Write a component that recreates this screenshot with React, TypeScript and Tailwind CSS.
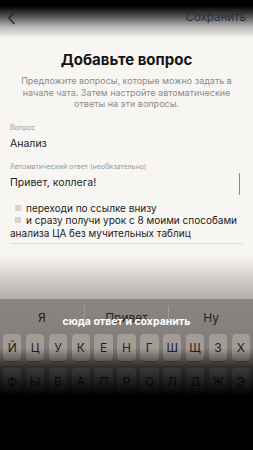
import React from "react";

const row1 = ["Й", "Ц", "У", "К", "Е", "Н", "Г", "Ш", "Щ", "З", "Х"];
const row2 = ["Ф", "Ы", "В", "А", "П", "Р", "О", "Л", "Д", "Ж", "Э"];

function KeyRow({ keys }: { keys: string[] }) {
  return (
    <div className="flex gap-[4.5px] px-[3px] h-[27px]">
      {keys.map((k) => (
        <div
          key={k}
          className="flex-1 rounded-[4px] bg-[#a29c97] shadow-[0_1px_0_rgba(0,0,0,0.25)] flex items-center justify-center text-[12px] text-[#242220]"
        >
          {k}
        </div>
      ))}
    </div>
  );
}

export default function App() {
  return (
    <div
      className="relative w-[253px] h-[450px] overflow-hidden bg-[#f8f6f3] flex flex-col"
      style={{ fontFamily: "Inter, 'Liberation Sans', sans-serif" }}
    >
      {/* top fade */}
      <div className="absolute left-0 right-0 top-0 h-[38px] bg-[linear-gradient(to_bottom,#000_0px,#000_6px,rgba(0,0,0,0.68)_16px,rgba(0,0,0,0.25)_27px,transparent_38px)]" />

      {/* header */}
      <div className="relative z-10 h-[36px] flex items-start justify-between px-[7px] pt-[8px] shrink-0">
        <svg width="10" height="14" viewBox="0 0 10 14" className="mt-[3px]">
          <path d="M7 1.5 L2 7 L7 12.5" fill="none" stroke="#2a2a2a" strokeWidth="1.6" strokeLinecap="round" strokeLinejoin="round" />
        </svg>
        <span className="text-[11.5px] text-[#262f44] mt-[1px]">Сохранить</span>
      </div>

      <div className="flex-1 min-h-0 flex flex-col">
        <h1 className="mt-[14px] text-center text-[15px] leading-[20px] font-bold text-[#141414]">
          Добавьте вопрос
        </h1>
        <p className="mt-[5px] px-[20px] text-center text-[9px] leading-[11.5px] text-[#8e8b88]">
          Предложите вопросы, которые можно задать в начале чата. Затем настройте автоматические ответы на эти вопросы.
        </p>

        <div className="px-[10px]">
          <div className="mt-[13px] text-[7px] leading-[10px] text-[#9a9794]">Вопрос</div>
          <div className="mt-[4px] text-[10.5px] leading-[14px] text-[#1c1c1c]">Анализ</div>

          <div className="mt-[11px] text-[7px] leading-[10px] text-[#9a9794]">
            Автоматический ответ (необязательно)
          </div>
          <div className="relative mt-[5px] pb-[4px] border-b border-[#dfdcd8] text-[10px] leading-[12.5px] text-[#1c1c1c]">
            <div className="text-[10.5px]">Привет, коллега!</div>
            <div className="h-[12.5px]" />
            <div className="flex items-center">
              <span className="ml-[5px] mr-[5px] w-[6px] h-[6px] bg-[#d6d3cf]" />
              переходи по ссылке внизу
            </div>
            <div className="flex items-center">
              <span className="ml-[5px] mr-[5px] w-[6px] h-[6px] bg-[#d6d3cf]" />
              и сразу получи урок с 8 моими способами
            </div>
            <div>анализа ЦА без мучительных таблиц</div>
            <div className="absolute right-[3px] top-[-4px] w-[1.5px] h-[22px] bg-[#8a8886]" />
          </div>
        </div>
      </div>

      <div className="h-[44px] shrink-0 bg-gradient-to-b from-[#f8f6f3] to-[#b3aeaa]" />

      {/* keyboard */}
      <div className="h-[151px] shrink-0 bg-gradient-to-b from-[#8c8682] to-[#6e6965]">
        <div className="h-[33px] flex items-center text-[12px] text-[#222]">
          <div className="flex-1 text-center pt-[4px]">Я</div>
          <div className="w-px h-[20px] bg-[#9e9995]" />
          <div className="flex-1 text-center pt-[4px]">Привет</div>
          <div className="w-px h-[20px] bg-[#9e9995]" />
          <div className="flex-1 text-center pt-[4px]">Ну</div>
        </div>
        <div className="mt-[2px]">
          <KeyRow keys={row1} />
        </div>
        <div className="mt-[7px]">
          <KeyRow keys={row2} />
        </div>
      </div>

      {/* caption overlay */}
      <div className="absolute left-0 right-0 top-[315px] text-center text-[10.5px] leading-[14px] font-bold text-white">
        сюда ответ и сохранить
      </div>

      {/* bottom fade */}
      <div className="absolute left-0 right-0 top-[348px] bottom-0 flex flex-col">
        <div className="h-[18px] bg-gradient-to-b from-transparent to-black/60" />
        <div className="h-[30px] bg-gradient-to-b from-black/60 to-black" />
        <div className="flex-1 bg-black" />
      </div>
    </div>
  );
}
